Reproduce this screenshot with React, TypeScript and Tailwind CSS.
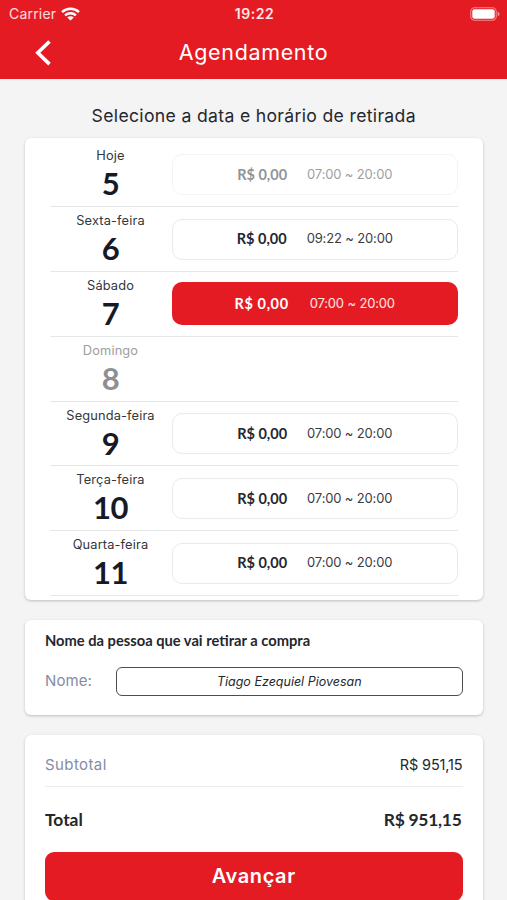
import React, { useState } from 'react';
import clsx from 'clsx';

interface Day {
  label: string;
  number: number;
  hours?: string;
  disabled?: boolean;
}

const days: Day[] = [
  { label: 'Hoje', number: 5, hours: '07:00 ~ 20:00', disabled: true },
  { label: 'Sexta-feira', number: 6, hours: '09:22 ~ 20:00' },
  { label: 'Sábado', number: 7, hours: '07:00 ~ 20:00' },
  { label: 'Domingo', number: 8, disabled: true },
  { label: 'Segunda-feira', number: 9, hours: '07:00 ~ 20:00' },
  { label: 'Terça-feira', number: 10, hours: '07:00 ~ 20:00' },
  { label: 'Quarta-feira', number: 11, hours: '07:00 ~ 20:00' },
];

const StatusBar: React.FC = () => (
  <div className="grid h-7 grid-cols-3 items-center pl-[9px] pr-[7px] text-[14px] leading-none">
    <div className="flex items-center gap-[5px]">
      <span className="tracking-[0.2px] text-white/85">Carrier</span>
      <svg className="-mt-px" width="19" height="14" viewBox="0 0 18 14" preserveAspectRatio="none" fill="none" stroke="white" strokeWidth="2.4">
        <path d="M1 5.1a11.3 11.3 0 0 1 16 0" />
        <path d="M3.9 8.3a7.2 7.2 0 0 1 10.2 0" />
        <path d="M9 13.6 5.9 10.6a4.4 4.4 0 0 1 6.2 0z" fill="white" stroke="none" />
      </svg>
    </div>
    <span className="text-center font-semibold tracking-[0.5px] text-white/90">19:22</span>
    <svg className="-mt-px justify-self-end" width="30" height="14" viewBox="0 0 30 14" fill="none">
      <rect x="0.8" y="0.8" width="25.4" height="12.4" rx="3.8" stroke="white" strokeOpacity="0.5" strokeWidth="1.1" />
      <rect x="2.3" y="2.3" width="22.4" height="9.4" rx="2.2" fill="white" />
      <path d="M27.7 4.8c1.2.4 1.8 1.2 1.8 2.2s-.6 1.8-1.8 2.2z" fill="white" fillOpacity="0.55" />
    </svg>
  </div>
);

interface DayRowProps {
  day: Day;
  selected: boolean;
  onSelect: () => void;
}

const DayRow: React.FC<DayRowProps> = ({ day, selected, onSelect }) => (
  <div className="flex h-[64.8px] items-center border-b-[1.5px] border-[#e6e7e8]">
    <div
      className={clsx(
        'flex w-[121px] flex-col items-center pt-px',
        day.disabled && day.hours === undefined ? 'text-[#8e8f91]' : 'text-[#151a26]'
      )}
    >
      <span
        className={clsx(
          'text-[12.8px] leading-[18px] tracking-[0.15px]',
          day.hours ? 'text-[#33363c]' : 'text-[#9c9da0]'
        )}
      >
        {day.label}
      </span>
      <span className="font-[Lato,sans-serif] text-[31px] leading-[37px] font-bold tracking-[-0.6px]">{day.number}</span>
    </div>
    {day.hours && (
      <button
        type="button"
        disabled={day.disabled}
        onClick={onSelect}
        className={clsx(
          'ml-px flex flex-1 items-center justify-center rounded-[10px] text-[13px]',
          selected
            ? 'h-[43px] gap-[21px] bg-[#e51b23] text-white'
            : 'h-[41px] gap-5 border-[1.5px] border-[#e9eaeb] text-[#24272d]',
          day.disabled && 'opacity-50'
        )}
      >
        <span
          className={clsx(
            'font-[Lato,sans-serif] text-[14.5px] font-bold',
            selected && 'tracking-[0.6px]'
          )}
        >
          R$ 0,00
        </span>
        <span className={clsx('tracking-[-0.15px]', selected ? 'text-white/90' : 'text-[#3a3d43]')}>{day.hours}</span>
      </button>
    )}
  </div>
);

export default function App() {
  const [selected, setSelected] = useState(7);
  const [name, setName] = useState('Tiago Ezequiel Piovesan');

  return (
    <div className="h-[900px] overflow-hidden bg-[#f4f4f5] font-[Inter,sans-serif] text-[#24272d]">
      <header className="h-[79px] bg-[#e51b23] text-white">
        <StatusBar />
        <div className="grid h-[49px] grid-cols-[60px_1fr_60px] items-center">
          <button type="button" aria-label="Voltar" className="pl-[34px]">
            <svg width="18" height="28" viewBox="0 0 18 28" fill="none" stroke="white" strokeWidth="3.6">
              <path d="M15.5 2.5 3.8 13.8l11.7 11.3" />
            </svg>
          </button>
          <h1 className="text-center text-[21.5px] tracking-[0.65px]">Agendamento</h1>
        </div>
      </header>

      <main className="flex flex-col pr-[24.5px] pl-[25px]">
        <h2 className="flex h-[58.5px] items-center justify-center pt-4 text-[17.6px] tracking-[0.33px] whitespace-nowrap">
          Selecione a data e horário de retirada
        </h2>

        <section className="h-[462.5px] rounded-md bg-white px-[25px] pt-[5px] shadow-[0_1px_3px_rgba(0,0,0,0.22)]">
          {days.map((day) => (
            <DayRow
              key={day.number}
              day={day}
              selected={selected === day.number}
              onSelect={() => setSelected(day.number)}
            />
          ))}
        </section>

        <section className="mt-[19.5px] h-[95px] rounded-md bg-white px-5 pt-[9px] shadow-[0_1px_3px_rgba(0,0,0,0.22)]">
          <h3 className="font-[Lato,sans-serif] text-[14.7px] leading-[22px] font-bold">
            Nome da pessoa que vai retirar a compra
          </h3>
          <div className="mt-4 flex items-center">
            <label htmlFor="nome" className="w-[71px] text-[15px] tracking-[0.1px] text-[#858ba3]">Nome:</label>
            <input
              id="nome"
              value={name}
              onChange={(e) => setName(e.target.value)}
              className="h-[29px] min-w-0 flex-1 rounded-[6px] border-[1.5px] border-[#4a4d52] text-center text-[12.5px] italic outline-none"
            />
          </div>
        </section>

        <section className="mt-5 h-[200px] rounded-md bg-white px-5 shadow-[0_1px_3px_rgba(0,0,0,0.22)]">
          <div className="flex h-[52px] items-center justify-between border-b-[1.5px] border-[#e9ebed] pt-[10px] text-[15px]">
            <span className="tracking-[0.4px] text-[#858ba3]">Subtotal</span>
            <span className="text-[14.5px] tracking-[-0.15px]">R$ 951,15</span>
          </div>
          <div className="flex h-[65px] items-center justify-between pt-[2px] pr-px font-[Lato,sans-serif] text-[17.4px] font-bold">
            <span>Total</span>
            <span className="tracking-[-0.25px]">R$ 951,15</span>
          </div>
          <button
            type="button"
            className="h-[49px] w-full rounded-[9px] bg-[#e51b23] text-[20px] font-semibold tracking-[0.6px] text-white"
          >
            Avançar
          </button>
        </section>
      </main>
    </div>
  );
}
